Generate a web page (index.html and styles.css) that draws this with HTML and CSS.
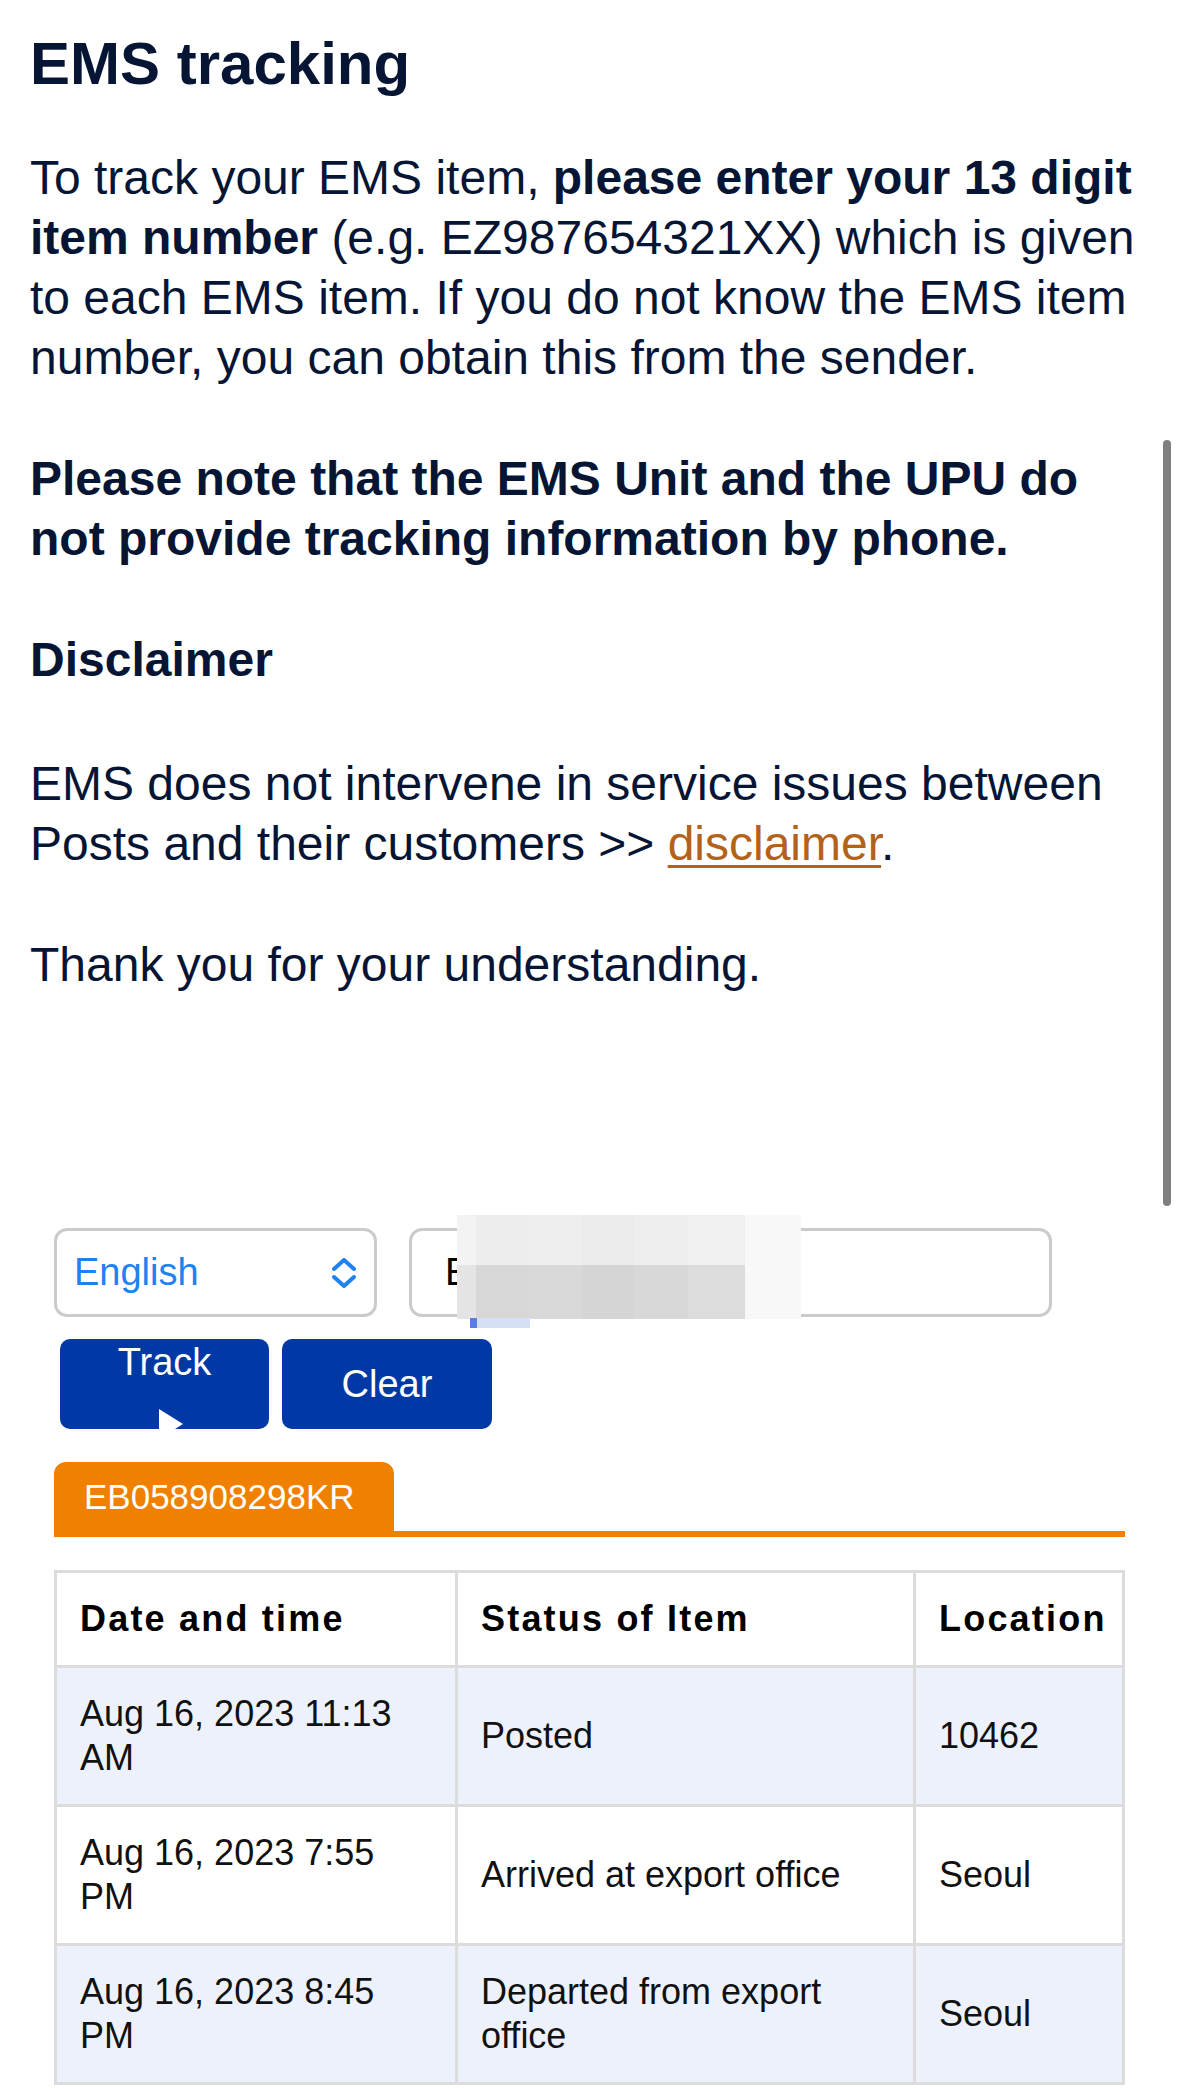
FILE: index.html
```html
<!DOCTYPE html>
<html lang="en">
<head>
    <meta charset="UTF-8">
    <meta name="viewport" content="width=device-width, initial-scale=1.0">
    <title>EMS tracking</title>
    <link rel="stylesheet" href="styles.css">
</head>
<body>
    <div class="container">
        <h1 class="page-title">EMS tracking</h1>

        <p class="intro">To track your EMS item, <strong>please enter your 13 digit item number</strong> (e.g. EZ987654321XX) which is given to each EMS item. If you do not know the EMS item number, you can obtain this from the sender.</p>
        <p class="intro"><strong>Please note that the EMS Unit and the UPU do not provide tracking information by phone.</strong></p>
        <p class="intro intro-head"><strong>Disclaimer</strong></p>
        <p class="intro">EMS does not intervene in service issues between Posts and their customers &gt;&gt; <a href="#" class="link">disclaimer</a>.</p>
        <p class="intro">Thank you for your understanding.</p>

        <div class="tracker">
            <form class="track-form" onsubmit="return false">
                <div class="form-row">
                    <div class="lang-select">
                        <span>English</span>
                        <svg class="chevrons" width="26" height="30" viewBox="0 0 26 30">
                            <polyline points="3,11 13,2 23,11" />
                            <polyline points="3,19 13,28 23,19" />
                        </svg>
                    </div>
                    <input type="text" class="item-input" value="EB058908298KR">
                    <!-- privacy blur over the typed number -->
                    <div class="redact" aria-hidden="true">
                        <div class="redact-col c0"><i></i><b></b></div>
                        <div class="redact-col c1"><i></i><b></b></div>
                        <div class="redact-col c2"><i></i><b></b></div>
                        <div class="redact-col c3"><i></i><b></b></div>
                        <div class="redact-col c4"><i></i><b></b></div>
                        <div class="redact-col c5"><i></i><b></b></div>
                        <div class="redact-col c6"><i></i><b></b></div>
                        <div class="redact-mark"></div>
                    </div>
                </div>

                <div class="btn-row">
                    <button type="submit" class="btn btn-track">
                        <span>Track</span>
                        <svg width="36" height="30" viewBox="0 0 36 30">
                            <polygon points="12,0 36,15 12,30" fill="#fff" />
                        </svg>
                    </button>
                    <button type="reset" class="btn btn-clear">Clear</button>
                </div>
            </form>

            <div class="tab-bar">
                <div class="tab">EB058908298KR</div>
            </div>

            <table class="events">
                <thead>
                    <tr>
                        <th class="col-date">Date and time</th>
                        <th class="col-status">Status of Item</th>
                        <th>Location</th>
                    </tr>
                </thead>
                <tbody>
                    <tr>
                        <td>Aug 16, 2023 11:13 AM</td>
                        <td>Posted</td>
                        <td>10462</td>
                    </tr>
                    <tr>
                        <td>Aug 16, 2023 7:55 PM</td>
                        <td>Arrived at export office</td>
                        <td>Seoul</td>
                    </tr>
                    <tr>
                        <td>Aug 16, 2023 8:45 PM</td>
                        <td>Departed from export office</td>
                        <td>Seoul</td>
                    </tr>
                </tbody>
            </table>
        </div>
    </div>

    <div class="scroll-thumb"></div>
</body>
</html>
```

FILE: styles.css
```css
* {
    margin: 0;
    padding: 0;
    box-sizing: border-box;
}

html,
body {
    overflow: hidden;
}

body {
    font-family: "Liberation Sans", Arial, Helvetica, sans-serif;
    background: #fff;
    color: #061534;
}

.container {
    padding: 28px 30px 0;
}

.page-title {
    font-size: 60px;
    line-height: 72px;
    font-weight: 700;
    margin-bottom: 48px;
}

.intro {
    font-size: 48px;
    line-height: 60px;
    margin-bottom: 61px;
}

.intro-head {
    margin-bottom: 64px;
}

.intro strong {
    font-weight: 700;
}

.link {
    color: #b3621a;
    text-decoration: underline;
    text-decoration-thickness: 3px;
    text-underline-offset: 5px;
}

.tracker {
    padding: 172px 24px 0;
}

.form-row {
    position: relative;
    display: flex;
    gap: 32px;
    height: 89px;
}

.lang-select {
    width: 323px;
    height: 89px;
    border: 3px solid #cbcbcb;
    border-radius: 13px;
    padding: 0 17px 0 17px;
    display: flex;
    align-items: center;
    justify-content: space-between;
    font-size: 38px;
    color: #1e82f0;
}

.chevrons polyline {
    fill: none;
    stroke: #1e82f0;
    stroke-width: 4;
    stroke-linecap: round;
    stroke-linejoin: round;
}

.item-input {
    width: 643px;
    height: 89px;
    border: 3px solid #cbcbcb;
    border-radius: 13px;
    padding: 0 33px;
    font-family: inherit;
    font-size: 38px;
    color: #000;
    background: #fff;
    outline: none;
}

.redact {
    position: absolute;
    left: 403px;
    top: -13px;
    width: 344px;
    height: 104px;
    display: flex;
}

.redact-col {
    display: flex;
    flex-direction: column;
    width: 53px;
}

.redact-col i {
    height: 50px;
}

.redact-col b {
    flex: 1;
}

.c0 { width: 19px; }
.c0 i { background: #f3f3f3; }
.c0 b { background: #e4e4e4; }
.c1 i { background: #ededed; }
.c1 b { background: #d7d7d7; }
.c2 i { background: #eeeeee; }
.c2 b { background: #d9d9d9; }
.c3 i { background: #ebebeb; }
.c3 b { background: #d5d5d5; }
.c4 i { background: #eeeeee; }
.c4 b { background: #d8d8d8; }
.c5 { width: 57px; }
.c5 i { background: #f0f0f0; }
.c5 b { background: #dcdcdc; }
.c6 { width: 56px; }
.c6 i,
.c6 b { background: #f8f8f8; }

.redact-mark {
    position: absolute;
    left: 13px;
    bottom: -9px;
    width: 60px;
    height: 10px;
    background: linear-gradient(to right, #5b7fe0 0 7px, #d5dff6 7px);
}

.btn-row {
    display: flex;
    gap: 13px;
    margin: 22px 0 0 6px;
}

.btn {
    width: 209px;
    height: 90px;
    background: #0039a6;
    color: #fff;
    border: none;
    border-radius: 10px;
    font-family: inherit;
    font-size: 38px;
    display: flex;
    flex-direction: column;
    align-items: center;
    justify-content: center;
    overflow: hidden;
    cursor: pointer;
}

.btn-track {
    justify-content: flex-start;
    padding-top: 1px;
}

.btn-track span {
    line-height: 44px;
}

.btn-track svg {
    flex-shrink: 0;
    margin-top: 25px;
}

.btn-clear {
    width: 210px;
}

.tab-bar {
    display: flex;
    margin-top: 33px;
    border-bottom: 6px solid #f08000;
}

.tab {
    height: 69px;
    display: flex;
    align-items: center;
    padding: 0 39px 0 30px;
    background: #f08000;
    color: #fff;
    font-size: 35px;
    border-radius: 12px 12px 0 0;
}

.events {
    width: 100%;
    margin-top: 33px;
    border-collapse: collapse;
    table-layout: fixed;
    font-size: 36px;
    line-height: 44px;
    color: #111;
}

.events th,
.events td {
    border: 3px solid #dcdcdc;
    padding: 24px 23px;
    text-align: left;
    vertical-align: middle;
}

.events th {
    font-weight: 700;
    letter-spacing: 2.2px;
    color: #000;
}

.col-date {
    width: 401px;
}

.col-status {
    width: 458px;
}

.events tbody tr:nth-child(odd) td {
    background: #edf1fc;
}

.scroll-thumb {
    position: fixed;
    top: 440px;
    right: 8px;
    width: 8px;
    height: 766px;
    background: #7f7f7f;
    border-radius: 4px;
}
```
